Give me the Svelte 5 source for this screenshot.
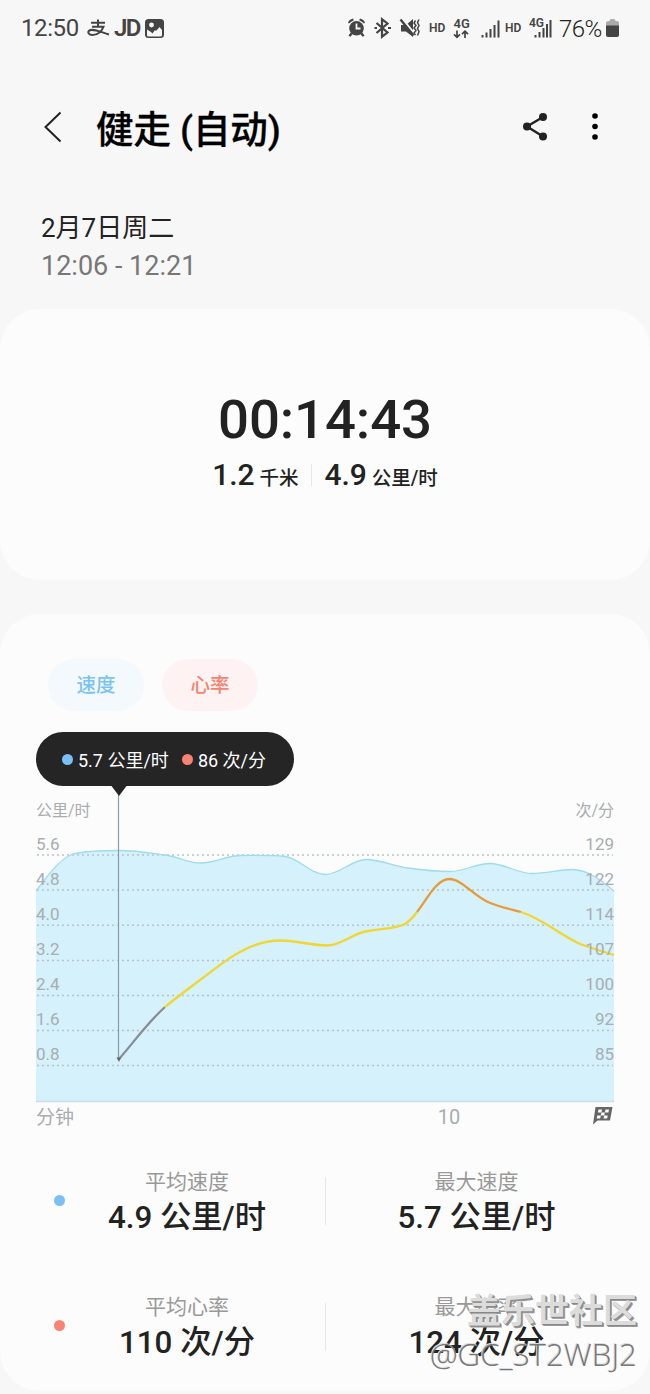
<script>
  const yLabels = [
    { y: 65, speed: '5.6', rate: '129' },
    { y: 100, speed: '4.8', rate: '122' },
    { y: 135.3, speed: '4.0', rate: '114' },
    { y: 170.5, speed: '3.2', rate: '107' },
    { y: 205.5, speed: '2.4', rate: '100' },
    { y: 240.5, speed: '1.6', rate: '92' },
    { y: 275.5, speed: '0.8', rate: '85' }
  ];

  const speedLine =
    'M36 101 C46 88 60 68 73 64 C86 61 104 60.5 119 60.5 C136 60.5 150 63 165 65 C179 67 188 73 201 73 C215 73 227 65.5 240 65.5 C256 65.5 272 65 285 66.5 C299 68 311 84.5 325 84.5 C340 84.5 352 69.5 366 69.5 C380 69.5 394 76 408 78 C422 80 436 81.5 450 81.5 C464 81.5 476 73.5 490 73.5 C504 73.5 518 83.5 532 83.5 C546 83.5 560 79.5 572 79.5 C588 79.5 602 91 614 101';

  const rows = [
    { kind: 'speed', items: [['平均速度', '4.9 公里/时'], ['最大速度', '5.7 公里/时']] },
    { kind: 'rate', items: [['平均心率', '110 次/分'], ['最大心率', '124 次/分']] }
  ];
</script>

<main>
  <div class="status">
    <span class="clock">12:50</span>
    <svg class="alipay" width="23" height="18" viewBox="0 0 23 18">
      <path d="M4 3.800h14M11 0.500v7M5 7.700h11.500C15 12 11 16 5.500 16C1.500 16 0.600 13.300 2 11.800C5 9 12 12.500 22 15.500" />
    </svg>
    <span class="jd">JD</span>
    <svg class="photo" width="19" height="19" viewBox="0 0 19 19">
      <rect width="19" height="19" rx="3.500" fill="#444" />
      <path d="M2 10.500l4 2.500 1.500 1.500 2-3 2 0 3-3.500 2.500 3v5q0 1.500-1.500 1.500h-12Q2 17.500 2 16z" fill="#f7f7f7" />
      <circle cx="6.500" cy="6" r="2.400" fill="#f7f7f7" />
    </svg>
    <span class="grow"></span>
    <svg class="icons" width="275" height="28" viewBox="0 0 275 28">
      <g fill="#444">
        <circle cx="10.500" cy="14.300" r="7.300" />
        <path d="M2 8.500q1-3 5-4l.8 1.800Q5 7.500 3 9.500zM19 8.500q-1-3-5-4l-.8 1.800Q16 7.500 18 9.500zM4.500 18.500l2 1.800-2 2.500-2-1zM16.500 18.500l-2 1.800 2 2.500 2-1z" />
        <path d="M55 11h5l7-6v18L60 17.500h-5z" />
      </g>
      <g fill="none" stroke="#444" stroke-width="2">
        <path d="M10.500 9.500v5h4" stroke="#f7f7f7" stroke-width="1.800" />
        <path d="M30.500 9l11 9.500-5.500 4.200V5.300L41.500 9.500 30.500 19M28.500 14h2.500M42 14h3" stroke-width="2.200" />
        <path d="M56 4.500l14 17" stroke="#f7f7f7" stroke-width="2" />
        <path d="M54.500 5.500l13 16" stroke-width="2.400" />
        <path d="M69.500 6.500l-1.500 2.500 2 2.500-2 2.500 2 2.500-2 2.500 1.500 2M73 5.500l-1.500 3 1.500 3-1.500 3 1.500 3-1.500 4" stroke-width="1.500" />
        <path d="M111 16.500v7M108 20.300l3 3 3-3M119 24v-7M116 20.200l3-3 3 3" stroke-width="1.700" />
        <path d="M136.500 21V23.500M140.500 18.500V23.500M144.500 15V23.500M148.500 11V23.500M152.500 6.500V23.500M189.500 21V23.500M193.500 18V23.500M197.500 14V23.500M201 10V23.500M204.500 6V23.500" />
      </g>
      <g class="net">
        <text x="83" y="18">HD</text>
        <text x="107.500" y="13.500" class="g">4G</text>
        <text x="159" y="18">HD</text>
        <text x="183" y="12.500">4G</text>
      </g>
      <text class="pct" x="213" y="22.500">76%</text>
      <path d="M262 7h1.500q0-2 2-2h2q2 0 2 2h1.500q2 0 2 2V13h-13V9q0-2 3-2z" fill="#aaa" />
      <path d="M260 11.500h13v9.500q0 2-2 2h-9q-2 0-2-2z" fill="#444" />
    </svg>
  </div>

  <header>
    <svg class="back" width="20" height="32" viewBox="0 0 20 32">
      <path d="M17.500 1.500L2.500 16L17.500 30.500" fill="none" stroke="#222" stroke-width="2" />
    </svg>
    <h1>健走 (自动)</h1>
    <svg class="share" width="28" height="30" viewBox="0 0 28 30">
      <path d="M21 5L5 14.500L21 24.500" fill="none" stroke="#222" stroke-width="2.400" />
      <g fill="#222"><circle cx="21" cy="5" r="4" /><circle cx="5" cy="14.500" r="4" /><circle cx="21" cy="24.500" r="4" /></g>
    </svg>
    <svg width="8" height="32" viewBox="0 0 8 32" fill="#000">
      <circle cx="4" cy="5" r="2.800" /><circle cx="4" cy="15.500" r="2.800" /><circle cx="4" cy="26" r="2.800" />
    </svg>
  </header>

  <div class="when">
    <div class="date">2月7日周二</div>
    <div class="time">12:06 - 12:21</div>
  </div>

  <section class="summary">
    <div class="duration">00:14:43</div>
    <div class="totals">
      <div><b>1.2</b> 千米</div>
      <i></i>
      <div><b>4.9</b> 公里/时</div>
    </div>
  </section>

  <section class="details">
    <div class="tabs">
      <button class="speed">速度</button>
      <button class="rate">心率</button>
    </div>
    <div class="tip">
      <span class="dot speed"></span><span class="val">5.7 公里/时</span>
      <span class="dot rate"></span><span>86 次/分</span>
    </div>

    <svg class="chart" width="650" height="350" viewBox="0 0 650 350">
      <path d="{speedLine} V311 H36 Z" fill="#d4f1fc" />
      {#each yLabels as row}
        <line x1="37" y1={row.y} x2="613" y2={row.y} class="grid" />
      {/each}
      <path d="M36 311.500H614" stroke="#c9dfe8" stroke-width="1.500" />
      <path d={speedLine} fill="none" stroke="#9fdbea" stroke-width="1.300" />
      <g fill="none" stroke-width="2.300">
        <path d="M119 269C134 252 148 232 165 217" stroke="#888d92" />
        <path d="M165 217C177 207 188 199 200 190C214 180 226 169 240 162C254 154 267 150.500 281 150.500C297 150.500 311 155.500 327 155.500C341 155.500 353 143 368 141C383 138.500 396 138.500 405 134Q411 130 417 122" stroke="#f0d630" />
        <path d="M417 122C427 109 437 89 449 89C461 88.500 474 106 488 112C499 117 510 119 521 122" stroke="#e89a38" />
        <path d="M521 122C543 129 560 145 580 154Q597 160 614 165" stroke="#f0d630" />
      </g>
      <g class="labels">
        <text x="36" y="26" class="unit">公里/时</text>
        <text x="614" y="26" class="unit end">次/分</text>
        {#each yLabels as row}
          <text x="36" y={row.y - 5.2}>{row.speed}</text>
          <text x="614" y={row.y - 5.2} class="end">{row.rate}</text>
        {/each}
        <text x="36" y="334" class="minutes">分钟</text>
        <text x="449" y="334" class="ten">10</text>
      </g>
      <path d="M118.500 5V270" stroke="#8d9da3" stroke-width="1.200" />
      <path d="M116.500 267.500h4.500l-2 4.500z" fill="#666" />
      <path d="M110 -6h18l-9 12z" fill="#252525" />
      <g class="flag">
        <path d="M595.500 317H612.500L610 330.500H597.500L593 334.500z" fill="#666" />
        <path d="M598.500 319.500h3.500l-.6 3h-3.500zM605.500 319.500h3.500l-.6 3h-3.500zM601.400 322.500h3.500l-.7 3h-3.500zM597.300 325.500h3.500l-.6 3h-3.500zM604.200 325.500h3.500l-.6 3h-3.500z" fill="#fcfcfc" />
      </g>
    </svg>

    {#each rows as row}
      <div class="stats">
        <span class="dot {row.kind}"></span>
        <div class="stat"><span>{row.items[0][0]}</span><strong>{row.items[0][1]}</strong></div>
        <i></i>
        <div class="stat"><span>{row.items[1][0]}</span><strong>{row.items[1][1]}</strong></div>
      </div>
    {/each}
  </section>

  <div class="watermark">
    <div class="site">盖乐世社区</div>
    <div class="user">@GC_ST2WBJ2</div>
  </div>
</main>

<style>
  :global(body) {
    background: #f7f7f7;
  }
  main {
    position: relative;
    width: 650px;
    height: 1394px;
    overflow: hidden;
    background: #f7f7f7;
    color: #222;
    font-family: Roboto, "Noto Sans CJK SC", sans-serif;
  }
  svg {
    display: block;
    flex: none;
  }
  .status {
    display: flex;
    align-items: center;
    height: 56px;
    padding: 0 29px 0 21px;
    color: #444;
  }
  .clock {
    width: 66px;
    font-size: 24px;
    letter-spacing: -0.4px;
  }
  .alipay path {
    fill: none;
    stroke: #444;
    stroke-width: 2;
  }
  .jd {
    width: 31px;
    margin-left: 4px;
    font-size: 24px;
    font-weight: 600;
    letter-spacing: -1.5px;
  }
  .grow {
    flex: 1;
  }
  .net text {
    font-size: 12px;
    font-weight: 600;
    fill: #444;
  }
  .net .g {
    font-size: 13px;
  }
  .pct {
    font-size: 24px;
    font-weight: 300;
    letter-spacing: -0.6px;
    fill: #222;
  }
  header {
    display: flex;
    align-items: center;
    height: 142px;
    margin-bottom: 11px;
    padding: 0 51px 0 43px;
  }
  h1 {
    flex: 1;
    margin: 5px 0 0 33px;
    font-size: 37.5px;
    line-height: 50px;
    font-weight: 500;
    letter-spacing: -0.1px;
    color: #000;
    -webkit-text-stroke: 0.3px #000;
  }
  .share {
    margin-right: 41px;
  }
  .when {
    height: 99px;
    padding: 1px 0 0 41px;
  }
  .date {
    font-size: 26px;
    line-height: 37px;
  }
  .time {
    font-size: 27px;
    line-height: 38px;
    color: #777;
  }
  section {
    background: #fcfcfc;
    border-radius: 40px;
  }
  .summary {
    height: 271px;
    display: flex;
    flex-direction: column;
    align-items: center;
  }
  .duration {
    margin-top: 77px;
    font-size: 54.5px;
    line-height: 66px;
    font-weight: 500;
    letter-spacing: -0.1px;
  }
  .totals {
    display: flex;
    align-items: center;
    margin-top: 2px;
    font-size: 19.5px;
    line-height: 42px;
    font-weight: 500;
  }
  .totals b {
    font-size: 30px;
    font-weight: 500;
  }
  i {
    width: 1px;
    background: #e6e6e6;
  }
  .totals i {
    height: 22px;
    margin: 0 12.5px 4px;
  }
  .details {
    height: 777px;
    margin-top: 34px;
  }
  .tabs {
    display: flex;
    gap: 18px;
    padding: 45px 0 0 48px;
  }
  button {
    width: 96px;
    height: 52px;
    padding: 0;
    border: 0;
    border-radius: 26px;
    font: 500 19.5px/53px Roboto, "Noto Sans CJK SC", sans-serif;
  }
  button.speed {
    color: #7bc3f3;
    background: #f4f9fe;
  }
  button.rate {
    color: #f58370;
    background: #fef3f2;
  }
  .tip {
    display: flex;
    align-items: center;
    box-sizing: border-box;
    width: 258px;
    height: 54px;
    margin: 21px 0 0 36px;
    padding: 0 0 0 26px;
    border-radius: 27px;
    background: #252525;
    color: #fff;
    font-size: 18px;
  }
  .dot {
    flex: none;
    width: 11px;
    height: 11px;
    margin-right: 5px;
    border-radius: 50%;
  }
  .dot.speed {
    background: #7bc0f5;
  }
  .dot.rate {
    background: #f98372;
  }
  .val {
    margin-right: 13px;
  }
  .chart {
    margin-top: 4px;
    overflow: visible;
  }
  .grid {
    stroke: #b8c3c8;
    stroke-width: 1.6;
    stroke-dasharray: 2 3;
  }
  .labels text {
    font-size: 17px;
    fill: #a8adb0;
  }
  .labels .unit {
    font-size: 16px;
  }
  .labels .end {
    text-anchor: end;
  }
  .labels .minutes {
    font-size: 19px;
  }
  .labels .ten {
    font-size: 20px;
    text-anchor: middle;
  }
  .stats {
    display: grid;
    grid-template-columns: 16px 234px 42px 1fr;
    align-items: center;
    height: 125.5px;
    padding: 0 43px 0 54px;
  }
  .stats .dot {
    margin-bottom: 5px;
  }
  .stats i {
    height: 48px;
    margin-bottom: 3px;
    justify-self: center;
  }
  .stat {
    display: flex;
    flex-direction: column;
    align-items: center;
  }
  .stat span {
    font-size: 21px;
    line-height: 30px;
    color: #999;
  }
  .stat strong {
    font-size: 31.3px;
    line-height: 42px;
    font-weight: 500;
  }
  .watermark {
    position: absolute;
    right: 13px;
    bottom: 17px;
    text-align: right;
  }
  .site {
    font: 700 34px/44px "Noto Sans CJK SC", sans-serif;
    color: #dcdcdc;
    text-shadow: 1px 1px 0 #888, 2px 2px 0 #999;
  }
  .user {
    font: 300 31.3px/46px "Open Sans", sans-serif;
    color: #777;
    text-shadow: -1px -1px 0 #ddd;
  }
</style>
